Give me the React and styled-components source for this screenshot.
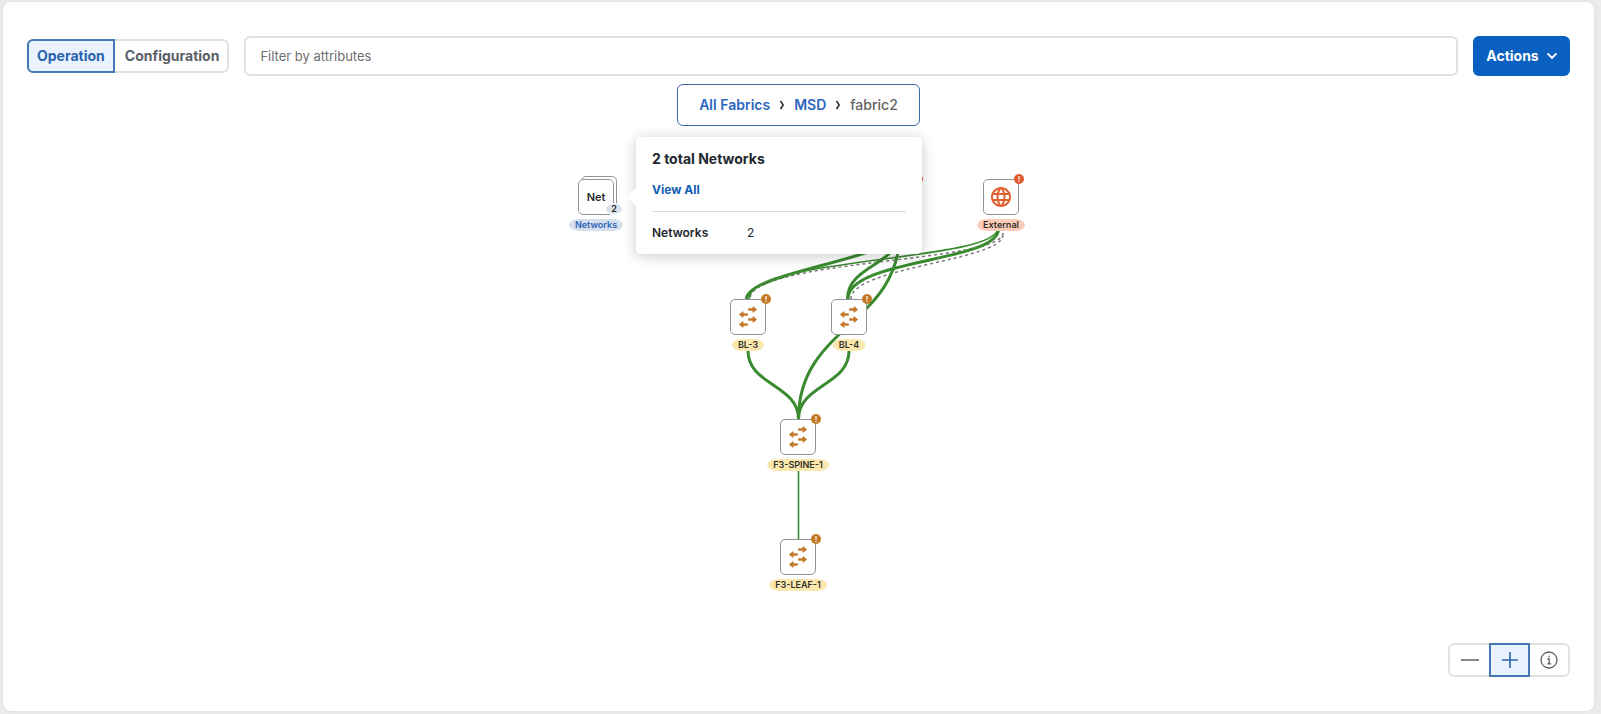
import React from "react";
import styled, { createGlobalStyle } from "styled-components";
import { MdLanguage } from "react-icons/md";

const GlobalStyle = createGlobalStyle`
  *, *::before, *::after { box-sizing: border-box; }
  body {
    margin: 0;
    background: #ebebeb;
    color: #23282e;
    font-family: Inter, "Liberation Sans", sans-serif;
    font-size: 14px;
  }
  button, input { font: inherit; color: inherit; }
  button { cursor: pointer; }
  a { text-decoration: none; }
`;

const Page = styled.div`
  display: flex;
  min-height: 100vh;
  padding: 2px 7px 3px 3px;
`;

const Card = styled.main`
  flex: 1;
  display: flex;
  flex-direction: column;
  padding: 34px 24px;
  background: #fff;
  border-radius: 8px;
  box-shadow: 0 0 4px rgba(0, 0, 0, 0.06);
`;

const Toolbar = styled.div`
  display: flex;
  align-items: center;
  gap: 15px;
`;

const Segments = styled.div`
  display: flex;
  height: 34px;
`;

const Segment = styled.button`
  display: flex;
  align-items: center;
  justify-content: center;
  padding: 0 8px;
  border: 2px solid #dfe1e3;
  background: #fff;
  color: #5a6068;
  font-weight: 700;
  line-height: 16px;
  &:first-child { border-radius: 6px 0 0 6px; border-right-width: 0; }
  &:last-child { border-radius: 0 6px 6px 0; border-left-width: 0; padding-left: 10px; }
  &&[aria-pressed="true"] {
    border: 2px solid #4478b3;
    background: #e9f3ff;
    color: #2b63ae;
  }
`;

const IconSegment = styled(Segment)`
  width: 41px;
  padding: 0;
  &:last-child { width: 40px; padding-left: 0; }
`;

const Filter = styled.input`
  flex: 1;
  min-width: 0;
  height: 40px;
  padding: 0 14px;
  border: 2px solid #dfdfe0;
  border-radius: 6px;
  background: #fff;
  font-size: 13px;
  &::placeholder { color: #6e6e6e; opacity: 1; }
`;

const ActionsButton = styled.button`
  display: flex;
  align-items: center;
  justify-content: center;
  gap: 8px;
  width: 97px;
  height: 40px;
  padding: 0;
  border: 0;
  border-radius: 6px;
  background: #0a60c0;
  color: #fff;
  font-weight: 700;
  line-height: 16px;
`;

const Breadcrumb = styled.nav`
  align-self: center;
  display: flex;
  align-items: center;
  justify-content: center;
  gap: 9px;
  width: 243px;
  height: 42px;
  margin-top: 8px;
  border: 1px solid #3b69a0;
  border-radius: 6px;
  background: #fff;
  font-weight: 500;
  line-height: 16px;
`;

const Crumb = styled.a`
  color: #2b66bd;
  font-weight: 600;
`;

const CurrentCrumb = styled.span`
  color: #626262;
`;

const Stage = styled.section`
  position: relative;
  align-self: center;
  width: 481px;
  height: 480px;
`;

const Links = styled.svg`
  position: absolute;
  inset: 0;
  width: 100%;
  height: 100%;
  fill: none;
  stroke: #3a8a30;
`;

const NodeBox = styled.button`
  position: absolute;
  left: ${(p) => p.$x}px;
  top: ${(p) => p.$y}px;
  display: flex;
  align-items: center;
  justify-content: center;
  width: 36px;
  height: 36px;
  padding: 0;
  border: 1px solid #8f949c;
  border-radius: 5px;
  background: #fff;
  color: ${(p) => (p.$tone === "critical" ? "#e2602f" : "#c37a2b")};
`;

const tones = {
  warning: ["#fae8ae", "#33302a"],
  critical: ["#fbcdb9", "#33302a"],
  info: ["#d6dfed", "#2f62b5"],
};

const NodeLabel = styled.span`
  position: absolute;
  top: 39px;
  left: 50%;
  transform: translateX(-50%);
  height: 12px;
  padding: 0 6px;
  border-radius: 10px / 6px;
  background: ${(p) => tones[p.$tone][0]};
  color: ${(p) => tones[p.$tone][1]};
  font-size: 9px;
  font-weight: 600;
  line-height: 12px;
  white-space: nowrap;
`;

const Badge = styled.svg`
  position: absolute;
  top: -6px;
  right: -6px;
  width: 10px;
  height: 10px;
`;

const StackBack = styled.span`
  position: absolute;
  left: ${(p) => p.$x}px;
  top: ${(p) => p.$y}px;
  width: 36px;
  height: 36px;
  border: 1px solid #8f949c;
  border-radius: 5px;
  background: #fff;
`;

const NetText = styled.span`
  color: #23282e;
  font-size: 11px;
  font-weight: 600;
`;

const Count = styled.span`
  position: absolute;
  right: -9px;
  bottom: 0;
  width: 16px;
  height: 10px;
  border-radius: 8px / 5px;
  background: #dde2ea;
  box-shadow: 0 0 0 1px #fff;
  color: #23282e;
  font-size: 9px;
  font-weight: 600;
  line-height: 10px;
  text-align: center;
`;

const Popover = styled.aside`
  position: absolute;
  left: 78px;
  top: 11px;
  width: 286px;
  padding: 13px 16px;
  border-radius: 5px;
  background: #fff;
  box-shadow: 0 2px 14px rgba(0, 0, 0, 0.22);
  &::before {
    content: "";
    position: absolute;
    left: -9px;
    top: 51px;
    border: solid transparent;
    border-width: 9px 9px 9px 0;
    border-right-color: #fff;
  }
`;

const PopoverTitle = styled.h2`
  margin: 0;
  font-size: 14px;
  font-weight: 700;
  line-height: 18px;
`;

const ViewAll = styled.a`
  display: block;
  margin: 13px 0;
  color: #1060b4;
  font-size: 12px;
  font-weight: 700;
  line-height: 17px;
`;

const Details = styled.dl`
  display: flex;
  margin: 0;
  padding-top: 12px;
  border-top: 1px solid #d9dadc;
  font-size: 12px;
  line-height: 17px;
`;

const Term = styled.dt`
  width: 95px;
  font-weight: 600;
`;

const Value = styled.dd`
  margin: 0;
`;

const ZoomControls = styled(Segments)`
  align-self: flex-end;
  margin-top: auto;
`;

const LineIcon = styled.svg`
  fill: none;
  stroke: currentColor;
  stroke-width: ${(p) => p.$weight || 2}px;
`;

const SwitchIcon = () => (
  <svg width="22" height="22" viewBox="-11 -11 22 22" aria-hidden="true">
    <path
      fill="none"
      stroke="currentColor"
      strokeWidth="2.3"
      d="M.2-7.5H6M.2 2.5H6M-.2-2.5H-6M-.2 7.5H-6"
    />
    <path
      fill="currentColor"
      stroke="currentColor"
      strokeWidth="1"
      strokeLinejoin="round"
      d="M5-10.3 8.6-7.5 5-4.7ZM5-.3 8.6 2.5 5 5.3ZM-5-5.3-8.6-2.5-5 .3ZM-5 4.7-8.6 7.5-5 10.3Z"
    />
  </svg>
);

const Alert = ({ tone }) => (
  <Badge viewBox="0 0 10 10" aria-hidden="true">
    <circle cx="5" cy="5" r="5" fill={tone === "critical" ? "#e2582f" : "#c37826"} />
    <path d="M5 2v3.7M5 6.8v1.2" stroke="#fff" strokeWidth="1.2" />
  </Badge>
);

const Crossing = () => (
  <LineIcon width="6" height="10" viewBox="0 0 6 10" $weight={1.5} aria-hidden="true">
    <path d="M1.5 1 4.2 5 1.5 9" />
  </LineIcon>
);

const nodes = [
  { name: "", tone: "critical", x: 324, y: 53 },
  { name: "External", tone: "critical", x: 425, y: 53, globe: true },
  { name: "BL-3", tone: "warning", x: 172, y: 173 },
  { name: "BL-4", tone: "warning", x: 273, y: 173 },
  { name: "F3-SPINE-1", tone: "warning", x: 222, y: 293 },
  { name: "F3-LEAF-1", tone: "warning", x: 222, y: 413 },
];

// Leaves and arrives upright; each bend is the share of the height its handle takes.
const link = (x1, y1, x2, y2, startBend = 0.5, endBend = 0.5) => {
  const height = y2 - y1;
  const c1 = y1 + height * startBend;
  const c2 = y2 - height * endBend;
  return `M${x1} ${y1}C${x1} ${c1} ${x2} ${c2} ${x2} ${y2}`;
};

const thickLinks = [
  [342, 105, 188.5, 173, 0.4, 0.4],
  [342, 105, 289.5, 173],
  [342, 105, 240.5, 293],
  [440.5, 103, 290, 173, 0.48, 0.58],
  [190, 225, 240.5, 293],
  [291, 225, 240.5, 293],
];
const thinLinks = [
  [440, 102, 191, 173, 0.48, 0.6],
  [240.5, 335, 240.5, 413],
];
const dashedLinks = [
  [445, 107, 192, 173, 0.45, 0.6],
  [445, 109, 293, 173, 0.4, 0.5],
];

export default function App() {
  return (
    <Page>
      <GlobalStyle />
      <Card>
        <Toolbar>
          <Segments role="group" aria-label="View">
            <Segment aria-pressed="true">Operation</Segment>
            <Segment aria-pressed="false">Configuration</Segment>
          </Segments>
          <Filter type="text" placeholder="Filter by attributes" aria-label="Filter by attributes" />
          <ActionsButton>
            Actions
            <LineIcon width="10" height="8" viewBox="0 0 10 8" $weight={1.8} aria-hidden="true">
              <path d="M.5 1.5 5 6 9.5 1.5" />
            </LineIcon>
          </ActionsButton>
        </Toolbar>
        <Breadcrumb aria-label="Breadcrumb">
          <Crumb href="#all">All Fabrics</Crumb>
          <Crossing />
          <Crumb href="#msd">MSD</Crumb>
          <Crossing />
          <CurrentCrumb aria-current="page">fabric2</CurrentCrumb>
        </Breadcrumb>
        <Stage aria-label="Topology">
          <Links viewBox="0 0 481 480" aria-hidden="true">
            <g strokeWidth="1.5" stroke="#7b7b7b" strokeDasharray="3 3">
              {dashedLinks.map((l) => <path key={l} d={link(...l)} />)}
            </g>
            <g strokeWidth="1.6">
              {thinLinks.map((l) => <path key={l} d={link(...l)} />)}
            </g>
            <g strokeWidth="3">
              {thickLinks.map((l) => <path key={l} d={link(...l)} />)}
            </g>
          </Links>
          {nodes.map((n) => (
            <NodeBox key={n.name} $x={n.x} $y={n.y} $tone={n.tone}>
              {n.globe ? <MdLanguage size={24} /> : <SwitchIcon />}
              <Alert tone={n.tone} />
              {n.name && <NodeLabel $tone={n.tone}>{n.name}</NodeLabel>}
            </NodeBox>
          ))}
          <StackBack $x={23} $y={50} />
          <NodeBox $x={20} $y={53}>
            <NetText>Net</NetText>
            <Count>2</Count>
            <NodeLabel $tone="info">Networks</NodeLabel>
          </NodeBox>
          <Popover>
            <PopoverTitle>2 total Networks</PopoverTitle>
            <ViewAll href="#networks">View All</ViewAll>
            <Details>
              <Term>Networks</Term>
              <Value>2</Value>
            </Details>
          </Popover>
        </Stage>
        <ZoomControls role="group" aria-label="Zoom">
          <IconSegment aria-pressed="false" aria-label="Zoom out">
            <LineIcon width="18" height="18" viewBox="0 0 18 18" $weight={1.5}><path d="M0 9h18" /></LineIcon>
          </IconSegment>
          <IconSegment aria-pressed="true" aria-label="Zoom in">
            <LineIcon width="16" height="16" viewBox="0 0 16 16" $weight={1.6}><path d="M0 8h16M8 0v16" /></LineIcon>
          </IconSegment>
          <IconSegment aria-pressed="false" aria-label="Information">
            <LineIcon width="18" height="18" viewBox="0 0 18 18" $weight={1.3}>
              <circle cx="9" cy="9" r="8" />
              <path d="M7.5 8H9.2V12.8M7.2 12.8H11.2M9 4.8V6.3" />
            </LineIcon>
          </IconSegment>
        </ZoomControls>
      </Card>
    </Page>
  );
}
